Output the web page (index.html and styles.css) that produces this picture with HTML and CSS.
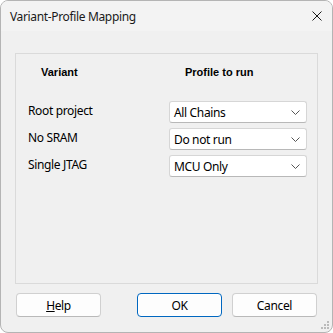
FILE: index.html
```html
<!DOCTYPE html>
<html>
	<head>
		<meta charset="UTF-8">
		<title>Variant-Profile Mapping</title>
		<link rel="stylesheet" href="styles.css">
	</head>
	<body>
		<div class="dialog">
			<div class="titlebar">
				<span class="title">Variant-Profile Mapping</span>
				<svg class="close" width="10" height="10" viewBox="0 0 10 10">
					<path d="M0.5 0.5L9.5 9.5M9.5 0.5L0.5 9.5" stroke="#1a1a1a" stroke-width="1"/>
				</svg>
			</div>
			<div class="content">
				<div class="panel">
					<div class="head">
						<span class="h-variant">Variant</span>
						<span class="h-profile">Profile to run</span>
					</div>
					<div class="row">
						<span class="label">Root project</span>
						<div class="combo"><span>All Chains</span><svg width="9" height="5" viewBox="0 0 9 5"><path d="M0.5 0.5L4.5 4.5L8.5 0.5" fill="none" stroke="#555" stroke-width="1"/></svg></div>
					</div>
					<div class="row">
						<span class="label">No SRAM</span>
						<div class="combo"><span>Do not run</span><svg width="9" height="5" viewBox="0 0 9 5"><path d="M0.5 0.5L4.5 4.5L8.5 0.5" fill="none" stroke="#555" stroke-width="1"/></svg></div>
					</div>
					<div class="row">
						<span class="label">Single JTAG</span>
						<div class="combo"><span>MCU Only</span><svg width="9" height="5" viewBox="0 0 9 5"><path d="M0.5 0.5L4.5 4.5L8.5 0.5" fill="none" stroke="#555" stroke-width="1"/></svg></div>
					</div>
				</div>
				<div class="buttons">
					<button class="btn"><u>H</u>elp</button>
					<button class="btn default">OK</button>
					<button class="btn">Cancel</button>
				</div>
			</div>
			<svg class="grip" width="9" height="9" viewBox="0 0 9 9">
				<rect x="6" y="0" width="2" height="2" fill="#bbb"/>
				<rect x="3" y="3" width="2" height="2" fill="#bbb"/>
				<rect x="6" y="3" width="2" height="2" fill="#bbb"/>
				<rect x="0" y="6" width="2" height="2" fill="#bbb"/>
				<rect x="3" y="6" width="2" height="2" fill="#bbb"/>
				<rect x="6" y="6" width="2" height="2" fill="#bbb"/>
			</svg>
		</div>
	</body>
</html>
```

FILE: styles.css
```css
*{
	margin: 0;
	padding: 0;
	box-sizing: border-box;
}
body{
	background: #ffffff;
	font-family: "Noto Sans", "Liberation Sans", sans-serif;
	font-size: 12px;
	letter-spacing: -0.35px;
	color: #000000;
}
.dialog{
	width: 333px;
	height: 333px;
	border: 1px solid #b4b4b4;
	border-radius: 8px;
	background: #f0f0f0;
	position: relative;
	overflow: hidden;
}
.titlebar{
	height: 30px;
	background: #f3f3f3;
	display: flex;
	align-items: center;
	padding: 0 10px 0 9px;
}
.title{
	flex: 1;
	font-size: 12px;
	color: #1a1a1a;
}
.content{
	padding: 22px 14px 0 14px;
}
.panel{
	height: 231px;
	border: 1px solid #dadada;
	padding: 12px 10px 0 12px;
}
.head{
	display: flex;
	height: 16px;
	font-family: "Liberation Sans", Arial, sans-serif;
	font-size: 11px;
	font-weight: bold;
	letter-spacing: 0;
	margin-bottom: 19px;
}
.h-variant{
	width: 157px;
	padding-left: 13px;
}
.row{
	display: flex;
	align-items: center;
	height: 22px;
	margin-bottom: 5px;
}
.label{
	width: 141px;
	margin-bottom: 4px;
}
.combo{
	width: 138px;
	height: 22px;
	background: #ffffff;
	border: 1px solid #d6d6d6;
	border-bottom-color: #b8b8b8;
	border-radius: 3px;
	display: flex;
	align-items: center;
	justify-content: space-between;
	padding: 0 6px 0 4px;
}
.buttons{
	display: flex;
	gap: 10px;
	margin-top: 9px;
	padding-left: 1px;
}
.btn{
	width: 85px;
	flex-shrink: 0;
	height: 24px;
	background: #fdfdfd;
	border: 1px solid #d0d0d0;
	border-bottom-color: #b9b9b9;
	border-radius: 4px;
	font-family: "Noto Sans", "Liberation Sans", sans-serif;
	font-size: 12px;
	letter-spacing: -0.35px;
	color: #000000;
}
.btn.default{
	margin-left: 26px;
	border: 1px solid #0067c0;
	box-shadow: inset 0 0 0 1px #ffffff;
}
.grip{
	position: absolute;
	right: 2px;
	bottom: 2px;
}
```
